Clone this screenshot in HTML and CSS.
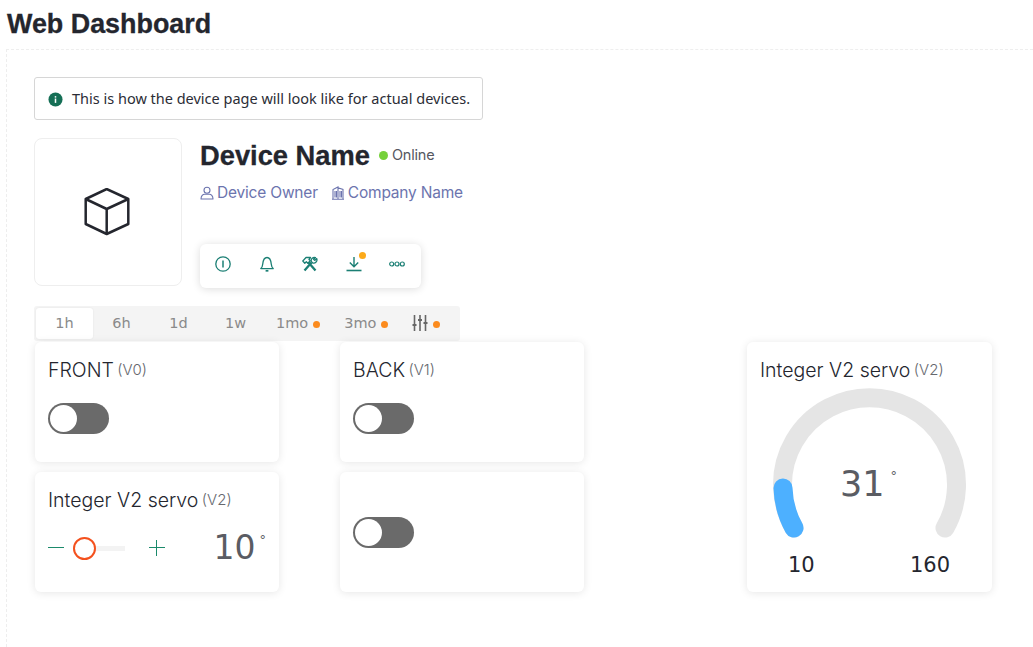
FILE: index.html
```html
<!DOCTYPE html>
<html lang="en">
<head>
  <meta charset="UTF-8" />
  <title>Web Dashboard</title>
  <link rel="stylesheet" href="styles.css">
</head>
<body>
  <h1 class="page-title">Web Dashboard</h1>
  <div class="canvas">
    <div class="notice">
      <svg class="notice-icon" viewBox="0 0 16 16" width="15" height="15"><circle cx="8" cy="8" r="7.5" fill="#156f56"/><rect x="7.2" y="7" width="1.6" height="4.6" fill="#fff"/><rect x="7.2" y="4.4" width="1.6" height="1.6" fill="#fff"/></svg>
      <span class="notice-text">This is how the device page will look like for actual devices.</span>
    </div>
    <div class="device">
      <div class="device-image">
        <svg viewBox="0 0 48 48" width="48" height="48" fill="none" stroke="#24262e" stroke-width="2.5" stroke-linejoin="round"><path d="M22.700 1 44.300 11V36L22.700 46 1.700 36V11z"/><path d="M1.700 11 22.700 21 44.300 11M22.700 21V46"/></svg>
      </div>
      <div class="device-info">
        <div class="device-head">
          <h2 class="device-name">Device Name</h2>
          <span class="status-dot"></span>
          <span class="status">Online</span>
        </div>
        <div class="device-meta">
          <span class="meta-item">
            <svg viewBox="0 0 14 14" width="14" height="14" fill="none" stroke="#6c74ae" stroke-width="1.100"><circle cx="7" cy="4.200" r="3"/><path d="M1 13c0-3 2-4.800 3.600-4.800h4.800C11 8.200 13 10 13 13z" stroke-linejoin="round"/></svg>
            Device Owner
          </span>
          <span class="meta-item">
            <svg viewBox="0 0 14 14" width="14" height="14" fill="none" stroke="#6c74ae" stroke-width="1.100"><path d="M1 13.200h12M2 13V3.500l5-2.500V13M7 1.800l5 1.700V13M4 5v6.500M5.500 5v6.500M9 5v6.500M10.500 5v6.500"/></svg>
            Company Name
          </span>
        </div>
        <div class="tabs">
          <button class="tab-icon">
            <svg viewBox="0 0 16 16" width="16" height="16" fill="none" stroke="#1b7f74" stroke-width="1.300"><circle cx="8" cy="8" r="7.200"/><path d="M8 4.500v7" stroke-width="1.500"/></svg>
          </button>
          <button class="tab-icon">
            <svg viewBox="0 0 16 16" width="16" height="16" fill="none" stroke="#1b7f74" stroke-width="1.300" stroke-linejoin="round"><path d="M1.800 12.600c1.200-1 1.700-2.200 1.900-4.300C4 5 5.500 1.500 8 1.500s4 3.500 4.300 6.800c.2 2.100.7 3.300 1.900 4.300z"/><path d="M6.600 14.800h2.800" stroke-width="1.700"/></svg>
          </button>
          <button class="tab-icon">
            <svg viewBox="0 0 16 16" width="16" height="16" fill="none" stroke="#1b7f74" stroke-width="1.300" stroke-linejoin="round"><path d="M6.500 6.500 13.500 14.500M9.500 6.500 2.500 14.500" stroke-width="2.300"/><path d="M.8 5 4 1.500h4.500L7 3.500l1.300 1.300-2.500 2.500L4.300 5.800 2.800 7.200z"/><path d="M9.300 5.500a3.300 3.300 0 0 1 4.200-4L11.600 3.300l1.100 1.100L14.700 2.600a3.300 3.300 0 0 1-4 4.400z"/></svg>
          </button>
          <button class="tab-icon">
            <svg viewBox="0 0 16 16" width="16" height="16" fill="none" stroke="#1b7f74" stroke-width="1.400"><path d="M8 1v9.500M3.800 6.500 8 10.800 12.200 6.500"/><path d="M.5 14.500h15" stroke-width="1.600"/></svg>
            <span class="badge"></span>
          </button>
          <button class="tab-icon">
            <svg viewBox="0 0 16 16" width="16" height="16" fill="none" stroke="#1b7f74" stroke-width="1.200"><circle cx="2.700" cy="8" r="2"/><circle cx="8" cy="8" r="2"/><circle cx="13.300" cy="8" r="2"/></svg>
          </button>
        </div>
      </div>
    </div>
    <div class="ranges">
      <span class="range active">1h</span>
      <span class="range">6h</span>
      <span class="range">1d</span>
      <span class="range">1w</span>
      <span class="range range-more">1mo<i class="dot"></i></span>
      <span class="range range-more">3mo<i class="dot"></i></span>
      <span class="range range-more">
        <svg viewBox="0 0 16 18" width="16" height="18" fill="none" stroke="#666" stroke-width="1.600"><path d="M2.500 1v16M8 1v16M13.500 1v16"/><path d="M.5 11h4M6 6h4M11.500 9h4" stroke-width="2"/></svg>
        <i class="dot"></i>
      </span>
    </div>
    <div class="widgets">
      <div class="card">
        <div class="card-title">FRONT <span class="pin">(V0)</span></div>
        <div class="switch"><span class="knob"></span></div>
      </div>
      <div class="card">
        <div class="card-title">BACK <span class="pin">(V1)</span></div>
        <div class="switch"><span class="knob"></span></div>
      </div>
      <div class="card gauge-card">
        <div class="card-title">Integer V2 servo <span class="pin">(V2)</span></div>
        <div class="gauge">
          <svg viewBox="0 0 198 155" width="198" height="155" fill="none" stroke-width="19" stroke-linecap="round">
            <path d="M24 143A87 87 0 1 1 175 143" stroke="#e5e5e5"/>
            <path d="M24 143A87 87 0 0 1 13 103" stroke="#4db0ff"/>
          </svg>
          <div class="gauge-value">31<sup class="deg">°</sup></div>
        </div>
        <div class="gauge-limits"><span>10</span><span>160</span></div>
      </div>
      <div class="card">
        <div class="card-title">Integer V2 servo <span class="pin">(V2)</span></div>
        <div class="slider-row">
          <span class="step minus"></span>
          <div class="slider"><span class="slider-thumb"></span></div>
          <span class="step plus"></span>
          <div class="slider-value">10<sup class="deg">°</sup></div>
        </div>
      </div>
      <div class="card card-center">
        <div class="switch"><span class="knob"></span></div>
      </div>
    </div>
  </div>
</body>
</html>
```

FILE: styles.css
```css
* {
  box-sizing: border-box;
}
html, body {
  height: 100%;
}
body {
  margin: 0;
  overflow: hidden;
  background: #fff;
  color: #24262e;
  font-family: Inter, "Liberation Sans", sans-serif;
}
.page-title {
  margin: 0;
  padding: 9px 0 0 7px;
  height: 49px;
  font-family: "Liberation Sans", sans-serif;
  font-size: 26.900px;
  line-height: 30px;
  font-weight: 700;
  -webkit-text-stroke: 0.3px #24262e;
}
.canvas {
  margin-left: 6px;
  height: 598px;
  padding: 27px 0 0 27px;
  border-top: 1px dashed #eee;
  border-left: 1px dashed #eee;
}
.notice {
  display: inline-flex;
  align-items: center;
  gap: 9px;
  height: 43px;
  width: 449px;
  padding: 0 13px;
  border: 1px solid #d6d6d6;
  border-radius: 3px;
  font-family: "Noto Sans", sans-serif;
  font-size: 14.500px;
  color: #2b2d36;
  white-space: nowrap;
  vertical-align: top;
}
.notice-icon {
  flex: none;
  margin-top: 1px;
}
.notice-text {
  margin-top: -1px;
}
.device {
  display: flex;
  gap: 18px;
  margin-top: 18px;
}
.device-image {
  display: flex;
  align-items: center;
  justify-content: center;
  width: 148px;
  height: 148px;
  border: 1px solid #eee;
  border-radius: 8px;
}
.device-info {
  display: flex;
  flex-direction: column;
  align-items: flex-start;
}
.device-head {
  display: flex;
  align-items: center;
  height: 34px;
}
.device-name {
  margin: 0 9px 0 0;
  padding-top: 2px;
  font-family: "Liberation Sans", sans-serif;
  font-size: 27.300px;
  line-height: 34px;
  font-weight: 700;
  -webkit-text-stroke: 0.3px #24262e;
}
.status-dot {
  width: 9px;
  height: 9px;
  margin-right: 4px;
  border-radius: 50%;
  background: #76d13b;
}
.status {
  position: relative;
  top: -1px;
  font-size: 14.500px;
  color: #55575f;
  letter-spacing: -0.2px;
}
.device-meta {
  display: flex;
  gap: 13px;
  margin-top: 11px;
  color: #6c74ae;
  font-size: 15.500px;
  line-height: 20px;
}
.meta-item {
  display: flex;
  align-items: center;
  gap: 3px;
  letter-spacing: -0.2px;
}
.tabs {
  display: flex;
  align-items: center;
  gap: 27.500px;
  width: 221px;
  height: 44px;
  margin-top: 41px;
  padding: 0 14px 4px 15px;
  border-radius: 6px;
  background: #fff;
  box-shadow: 0 1px 8px rgba(0, 0, 0, 0.14);
}
.tab-icon {
  position: relative;
  display: flex;
  padding: 0;
  border: none;
  background: none;
}
.badge {
  position: absolute;
  top: -4px;
  right: -4px;
  width: 7px;
  height: 7px;
  border-radius: 50%;
  background: #fcaa1a;
}
.ranges {
  display: flex;
  align-items: center;
  width: 426px;
  height: 35px;
  margin-top: 18px;
  padding: 0 2px;
  border-radius: 3px;
  background: #f4f4f4;
  color: #8a8a8a;
  font-family: "DejaVu Sans", sans-serif;
  font-size: 14.500px;
}
.range {
  display: flex;
  align-items: center;
  justify-content: center;
  gap: 5px;
  width: 57px;
  height: 31px;
  padding-bottom: 2px;
  border-radius: 3px;
}
.range-more {
  width: auto;
  padding: 0 12px 2px;
}
.range.active {
  background: #fff;
  box-shadow: 0 0 2px rgba(0, 0, 0, 0.08);
}
.dot {
  width: 7px;
  height: 7px;
  margin-top: 3px;
  border-radius: 50%;
  background: #fb8b1e;
}
.widgets {
  display: grid;
  grid-template-columns: 244px 61px 244px 163px 245px;
  grid-template-rows: 120px 120px;
  row-gap: 10px;
  margin: 1px 0 0 1px;
}
.card {
  padding: 16px 13px;
  border-radius: 6px;
  background: #fff;
  box-shadow: 0 1px 8px rgba(0, 0, 0, 0.1);
}
.card:nth-child(2), .card-center {
  grid-column: 3;
}
.card:nth-child(4) {
  grid-column: 1;
  grid-row: 2;
}
.card-center {
  grid-row: 2;
  display: flex;
  align-items: center;
  padding-top: 0;
  padding-bottom: 0;
}
.gauge-card {
  grid-column: 5;
  grid-row: 1 / 3;
  height: 250px;
}
.card-title {
  height: 24px;
  font-size: 19.500px;
  line-height: 24px;
  font-weight: 350;
  white-space: nowrap;
}
.pin {
  position: relative;
  top: -2px;
  margin-left: -2px;
  font-size: 15px;
  font-weight: 300;
  color: #66686e;
}
.switch {
  width: 61px;
  height: 31px;
  margin-top: 21px;
  padding: 2px;
  border-radius: 16px;
  background: #6a6a6a;
}
.card-center .switch {
  margin-top: 0;
}
.knob {
  display: block;
  width: 27px;
  height: 27px;
  border-radius: 50%;
  background: #fff;
}
.slider-row {
  display: flex;
  align-items: center;
  height: 40px;
  margin-top: 16px;
}
.step {
  position: relative;
  flex: none;
  width: 16px;
  height: 16px;
}
.step::before {
  content: "";
  position: absolute;
  top: 7px;
  left: 0;
  width: 16px;
  height: 1px;
  background: #1b8a6b;
}
.plus::after {
  content: "";
  position: absolute;
  top: 0;
  left: 7px;
  width: 1px;
  height: 16px;
  background: #1b8a6b;
}
.slider {
  position: relative;
  width: 52px;
  height: 5px;
  margin: 0 24px 0 9px;
  background: #f3f3f3;
}
.slider-thumb {
  position: absolute;
  top: -9px;
  left: 0;
  width: 23px;
  height: 23px;
  border: 2px solid #f4511e;
  border-radius: 50%;
  background: #fff;
}
.slider-value {
  margin-left: auto;
  color: #5a5c63;
  font-family: "DejaVu Sans", sans-serif;
  font-size: 33px;
  line-height: 40px;
  white-space: nowrap;
}
.deg {
  position: relative;
  top: 2px;
  margin-left: 4px;
  font-size: 13px;
  vertical-align: top;
  line-height: 20px;
}
.gauge {
  position: relative;
  margin: 3px 0 0 10px;
  width: 198px;
  height: 155px;
}
.gauge-value {
  position: absolute;
  top: 79px;
  left: 70px;
  color: #5a5c63;
  font-family: "DejaVu Sans", sans-serif;
  font-size: 35px;
  line-height: 40px;
  white-space: nowrap;
}
.gauge-value .deg {
  margin-left: 6px;
}
.gauge-limits {
  display: flex;
  justify-content: space-between;
  padding: 0 29px 0 28px;
  margin-top: 12px;
  font-family: "DejaVu Sans", sans-serif;
  font-size: 21px;
  line-height: 26px;
  color: #24262e;
}
```
